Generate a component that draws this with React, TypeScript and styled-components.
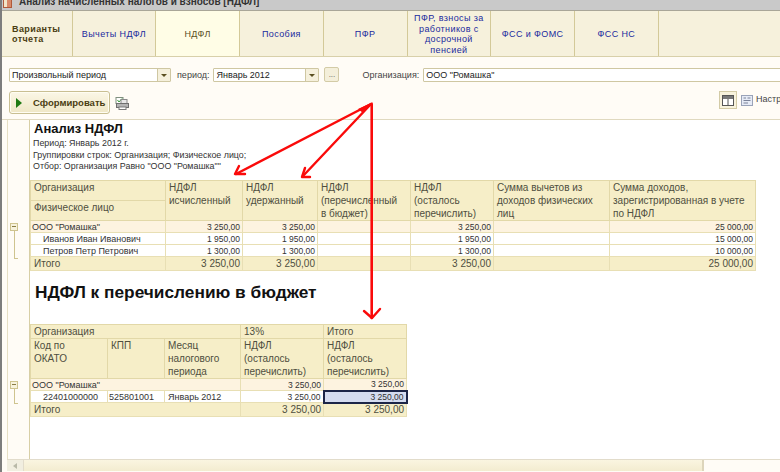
import React from 'react'
import styled, { createGlobalStyle } from 'styled-components'

const GlobalStyle = createGlobalStyle`
  html, body {
    margin: 0;
    padding: 0;
    width: 780px;
    height: 472px;
    overflow: hidden;
    background: #fffcf6;
    font-family: "Liberation Sans", Arial, sans-serif;
    color: #222;
  }
`

const Window = styled.div`
  position: relative;
  width: 780px;
  height: 472px;
  box-sizing: border-box;
  border-left: 2px solid #7d7d7d;
  display: flex;
  flex-direction: column;
  overflow: hidden;
`

const TitleBar = styled.div`
  height: 11px;
  flex: none;
  display: flex;
  gap: 7px;
  padding-left: 1px;
  background: #c9c9c9;
  border-bottom: 1px solid #a9a698;
  box-sizing: border-box;
  overflow: hidden;
`

const TitleIcon = styled.div`
  width: 9px;
  height: 8px;
  background: linear-gradient(90deg, #f3e6c8 50%, #d98a6a 50%);
  border: 1px solid #b05a3a;
  box-sizing: border-box;
  border-top: none;
`

const TitleText = styled.div`
  font-size: 10px;
  font-weight: 700;
  line-height: 4px;
  color: #333;
  white-space: nowrap;
`

const Tabs = styled.div`
  height: 46px;
  flex: none;
  display: flex;
  background: #f6f1dc;
  border-bottom: 1px solid #d8d0aa;
  box-sizing: border-box;
`

const Tab = styled.div<{ $active?: boolean; $first?: boolean }>`
  width: ${p => (p.$first ? 70.5 : 83.75)}px;
  box-sizing: border-box;
  flex: none;
  display: flex;
  align-items: center;
  justify-content: ${p => (p.$first ? 'flex-start' : 'center')};
  text-align: ${p => (p.$first ? 'left' : 'center')};
  padding: 1px 0 0 ${p => (p.$first ? 10 : 0)}px;
  font-size: 9px;
  line-height: 10.5px;
  letter-spacing: 0.4px;
  font-weight: ${p => (p.$first ? 700 : 400)};
  color: ${p => (p.$first ? '#4a3d12' : p.$active ? '#5a5024' : '#1a2a9e')};
  background: ${p => (p.$active ? '#fffde6' : 'transparent')};
  border-right: 1px solid #d3c998;
`

const FilterRow = styled.div`
  flex: none;
  height: 31px;
  display: flex;
  align-items: flex-start;
  padding: 11px 0 0 7px;
  box-sizing: border-box;
`

const Select = styled.div<{ $width: number }>`
  width: ${p => p.$width}px;
  flex: none;
  height: 14px;
  box-sizing: border-box;
  display: flex;
  align-items: center;
  background: #fff;
  border: 1px solid #cfc7a2;
  border-radius: 1px;
  font-size: 9px;
  padding-left: 2px;
  color: #222;
`

const SelectValue = styled.span`
  flex: 1;
  white-space: nowrap;
`

const SelectArrow = styled.span`
  width: 12px;
  height: 12px;
  flex: none;
  display: flex;
  align-items: center;
  justify-content: center;
  background: #f5f0dc;
  border-left: 1px solid #cfc7a2;
  &::after {
    content: '';
    border-left: 3px solid transparent;
    border-right: 3px solid transparent;
    border-top: 3px solid #5a4f20;
  }
`

const FieldLabel = styled.span<{ $left: number; $right: number }>`
  flex: none;
  font-size: 9px;
  line-height: 14px;
  margin: 0 ${p => p.$right}px 0 ${p => p.$left}px;
  color: #444;
  white-space: nowrap;
`

const DotsButton = styled.div`
  width: 15px;
  height: 15px;
  margin: -1px 0 0 5px;
  flex: none;
  box-sizing: border-box;
  background: #f4efda;
  border: 1px solid #d3cba6;
  border-radius: 2px;
  font-size: 8px;
  line-height: 14px;
  text-align: center;
  color: #555;
`

const ActionRow = styled.div`
  flex: none;
  height: 32px;
  display: flex;
  align-items: flex-start;
  padding: 3px 0 0 7px;
  box-sizing: border-box;
  border-bottom: 1px solid #e0d9bf;
`

const RunButton = styled.div`
  width: 101px;
  height: 23px;
  flex: none;
  box-sizing: border-box;
  display: flex;
  align-items: center;
  gap: 11px;
  padding-left: 6px;
  background: linear-gradient(#fbf7e6, #efe7c6);
  border: 1px solid #c9bf92;
  border-radius: 3px;
  box-shadow: inset 0 0 0 1px #fffdf2;
  font-size: 9.5px;
  font-weight: 700;
  color: #4a3d12;
  white-space: nowrap;
`

const PrintIcon = styled.svg`
  flex: none;
  margin: 6px 0 0 5px;
`

const Spacer = styled.div`
  flex: 1;
`

const ToggleButton = styled.div`
  width: 18px;
  height: 18px;
  flex: none;
  box-sizing: border-box;
  display: flex;
  align-items: center;
  justify-content: center;
  background: #f7f2dc;
  border: 1px solid #d3cba6;
`

const SettingsIcon = styled.svg`
  flex: none;
  margin: 4px 0 0 4px;
`

const SettingsLabel = styled.span`
  flex: none;
  width: 24px;
  margin: 3px 0 0 3px;
  overflow: hidden;
  font-size: 9px;
  line-height: 11px;
  color: #444;
  white-space: nowrap;
`

const Workspace = styled.div`
  flex: 1;
  min-height: 0;
  display: flex;
  padding-left: 5px;
`

const Gutter = styled.div`
  position: relative;
  width: 23px;
  flex: none;
  height: 340px;
  border-left: 1px solid #e6dfc4;
  border-right: 1px solid #d8cfa6;
  box-sizing: border-box;
`

const Collapse = styled.div<{ $top: number; $height: number }>`
  position: absolute;
  left: 2px;
  top: ${p => p.$top}px;
  width: 8px;
  height: 8px;
  box-sizing: border-box;
  background: #f7f2dc;
  border: 1px solid #cfc48f;
  &::before {
    content: '';
    position: absolute;
    left: 1px;
    right: 1px;
    top: 2px;
    height: 1px;
    background: #8a7d45;
  }
  &::after {
    content: '';
    position: absolute;
    left: 3px;
    top: 7px;
    width: 3px;
    height: ${p => p.$height}px;
    border-left: 1px solid #cfc48f;
    border-bottom: 1px solid #cfc48f;
  }
`

const Report = styled.div`
  flex: 1;
  min-width: 0;
  height: 340px;
  background: #fff;
  overflow: hidden;
`

const ReportTitle = styled.div`
  font-size: 13px;
  font-weight: 700;
  line-height: 15px;
  margin: 1px 0 0 4px;
  color: #111;
`

const ReportMeta = styled.div`
  font-size: 8.9px;
  line-height: 11.5px;
  margin-left: 3px;
  color: #333;
  white-space: nowrap;
`

const MetaBlock = styled.div`
  margin: 2px 0 6px;
  height: 36px;
`

const Heading = styled.div`
  font-size: 17.3px;
  font-weight: 700;
  line-height: 20px;
  margin: 11px 0 22px 5px;
  color: #111;
  white-space: nowrap;
`

const Table = styled.table<{ $width: number }>`
  width: ${p => p.$width}px;
  border-collapse: collapse;
  table-layout: fixed;
`

const HeadCell = styled.td<{ $height?: number }>`
  height: ${p => (p.$height ? `${p.$height}px` : 'auto')};
  padding: 0 2px 0 3px;
  vertical-align: top;
  background: #f6eec8;
  border: 1px solid #e2d8a8;
  box-sizing: border-box;
  font-size: 10px;
  line-height: 13px;
  color: #4f4f40;
`

const DataCell = styled.td<{
  $kind: 'group' | 'row' | 'total'
  $right?: boolean
  $indent?: number
  $selected?: boolean
  $name?: boolean
}>`
  padding: 0 2px 0 ${p => p.$indent ?? 1}px;
  box-sizing: border-box;
  white-space: nowrap;
  overflow: hidden;
  text-align: ${p => (p.$right ? 'right' : 'left')};
  height: ${p => (p.$kind === 'total' ? 14 : 12)}px;
  line-height: 10px;
  background: ${p => (p.$selected ? '#d5dcef' : p.$kind === 'group' ? '#fdf3e0' : p.$kind === 'total' ? '#f6eec8' : '#fff')};
  border: ${p => (p.$selected ? '2px solid #1c2547' : '1px solid #e8dfb4')};
  font-size: ${p => (p.$kind === 'total' ? '10px' : p.$name ? '9px' : '8.5px')};
  color: ${p => (p.$kind === 'total' ? '#4f4f40' : '#333')};
`

const Scrollbar = styled.div`
  position: absolute;
  left: 5px;
  right: 0;
  bottom: 1px;
  height: 12px;
  display: flex;
  background: #fffcf6;
  border-top: 1px solid #e2dccb;
  box-sizing: border-box;
`

const ScrollArrow = styled.div`
  width: 16px;
  flex: none;
  display: flex;
  align-items: center;
  justify-content: center;
  background: #f1eee0;
  border-right: 1px solid #e2dccb;
  &::after {
    content: '';
    border-top: 3px solid transparent;
    border-bottom: 3px solid transparent;
    border-right: 4px solid #b9b9a8;
  }
`

const ScrollThumb = styled.div`
  width: 678px;
  flex: none;
  background: linear-gradient(#faf5e0, #f3ecd0);
  border-right: 2px solid #ddd5bb;
`

const Arrows = styled.svg`
  position: absolute;
  left: -2px;
  top: 0;
  pointer-events: none;
`

const tabs = ['Вычеты НДФЛ', 'НДФЛ', 'Пособия', 'ПФР', 'ПФР, взносы за работников с досрочной пенсией', 'ФСС и ФОМС', 'ФСС НС']

const firstColumns = [135, 77, 75, 93, 83, 116, 146]
const secondColumns = [77, 57, 76, 83, 83]

const people = [
  { name: 'Иванов Иван Иванович', tax: '1 950,00', income: '15 000,00' },
  { name: 'Петров Петр Петрович', tax: '1 300,00', income: '10 000,00' },
]

const Columns = ({ widths }: { widths: number[] }) => (
  <colgroup>
    {widths.map((w, i) => (
      <col key={i} width={w} />
    ))}
  </colgroup>
)

const App = () => {
  return (
    <Window>
      <GlobalStyle />
      <TitleBar>
        <TitleIcon />
        <TitleText>Анализ начисленных налогов и взносов [НДФЛ]</TitleText>
      </TitleBar>

      <Tabs>
        <Tab $first>Варианты<br />отчета</Tab>
        {tabs.map(t => (
          <Tab key={t} $active={t === 'НДФЛ'}>{t}</Tab>
        ))}
      </Tabs>

      <FilterRow>
        <Select $width={162}>
          <SelectValue>Произвольный период</SelectValue>
          <SelectArrow />
        </Select>
        <FieldLabel $left={6} $right={4}>период:</FieldLabel>
        <Select $width={106}>
          <SelectValue>Январь 2012</SelectValue>
          <SelectArrow />
        </Select>
        <DotsButton>...</DotsButton>
        <FieldLabel $left={23} $right={4}>Организация:</FieldLabel>
        <Select $width={360}>
          <SelectValue>ООО "Ромашка"</SelectValue>
        </Select>
      </FilterRow>

      <ActionRow>
        <RunButton>
          <svg width="6" height="10" viewBox="0 0 6 10">
            <path d="M0 0 L6 5 L0 10 Z" fill="#1f7a12" />
          </svg>
          Сформировать
        </RunButton>
        <PrintIcon width="14" height="13" viewBox="0 0 14 13">
          <rect x="1" y="0.5" width="7" height="6" fill="#fff" stroke="#7f8f7f" />
          <path d="M2.5 3 L4 5 L7 1.5" fill="none" stroke="#3a9a3a" />
          <rect x="6" y="2.5" width="6" height="4" fill="#e8e8e8" stroke="#8a8a8a" />
          <rect x="1.5" y="6.5" width="12" height="4" fill="#b5b5b5" stroke="#6f6f6f" />
          <rect x="4" y="10" width="7" height="2.5" fill="#fff" stroke="#7a7a7a" />
        </PrintIcon>
        <Spacer />
        <ToggleButton>
          <svg width="12" height="11" viewBox="0 0 12 11">
            <rect x="0.5" y="0.5" width="11" height="10" fill="#fff" stroke="#555" />
            <rect x="1" y="1" width="10" height="3" fill="#777" />
            <path d="M6 4 V10" stroke="#555" />
          </svg>
        </ToggleButton>
        <SettingsIcon width="12" height="11" viewBox="0 0 12 11">
          <rect x="0.5" y="0.5" width="11" height="10" fill="#e6ebf6" stroke="#9aa3b8" />
          <path d="M2.5 3 H5 M6.5 3 H9.5 M2.5 5.5 H9.5 M2.5 8 H7" stroke="#7a8298" />
        </SettingsIcon>
        <SettingsLabel>Настройка</SettingsLabel>
      </ActionRow>

      <Workspace>
        <Gutter>
          <Collapse $top={103} $height={27} />
          <Collapse $top={261} $height={14} />
        </Gutter>
        <Report>
          <ReportTitle>Анализ НДФЛ</ReportTitle>
          <MetaBlock>
            <ReportMeta>Период: Январь 2012 г.</ReportMeta>
            <ReportMeta>Группировки строк: Организация; Физическое лицо;</ReportMeta>
            <ReportMeta>Отбор: Организация Равно "ООО "Ромашка""</ReportMeta>
          </MetaBlock>

          <Table $width={725}>
            <Columns widths={firstColumns} />
            <tbody>
              <tr>
                <HeadCell $height={20}>Организация</HeadCell>
                <HeadCell rowSpan={2}>НДФЛ<br />исчисленный</HeadCell>
                <HeadCell rowSpan={2}>НДФЛ<br />удержанный</HeadCell>
                <HeadCell rowSpan={2}>НДФЛ<br />(перечисленный<br />в бюджет)</HeadCell>
                <HeadCell rowSpan={2}>НДФЛ<br />(осталось<br />перечислить)</HeadCell>
                <HeadCell rowSpan={2}>Сумма вычетов из<br />доходов физических<br />лиц</HeadCell>
                <HeadCell rowSpan={2}>Сумма доходов,<br />зарегистрированная в учете<br />по НДФЛ</HeadCell>
              </tr>
              <tr>
                <HeadCell $height={20}>Физическое лицо</HeadCell>
              </tr>
              <tr>
                <DataCell $kind="group" $name>ООО "Ромашка"</DataCell>
                <DataCell $kind="group" $right>3 250,00</DataCell>
                <DataCell $kind="group" $right>3 250,00</DataCell>
                <DataCell $kind="group" />
                <DataCell $kind="group" $right>3 250,00</DataCell>
                <DataCell $kind="group" />
                <DataCell $kind="group" $right>25 000,00</DataCell>
              </tr>
              {people.map(p => (
                <tr key={p.name}>
                  <DataCell $kind="row" $indent={12} $name>{p.name}</DataCell>
                  <DataCell $kind="row" $right>{p.tax}</DataCell>
                  <DataCell $kind="row" $right>{p.tax}</DataCell>
                  <DataCell $kind="row" />
                  <DataCell $kind="row" $right>{p.tax}</DataCell>
                  <DataCell $kind="row" />
                  <DataCell $kind="row" $right>{p.income}</DataCell>
                </tr>
              ))}
              <tr>
                <DataCell $kind="total" $indent={3}>Итого</DataCell>
                <DataCell $kind="total" $right>3 250,00</DataCell>
                <DataCell $kind="total" $right>3 250,00</DataCell>
                <DataCell $kind="total" />
                <DataCell $kind="total" $right>3 250,00</DataCell>
                <DataCell $kind="total" />
                <DataCell $kind="total" $right>25 000,00</DataCell>
              </tr>
            </tbody>
          </Table>

          <Heading>НДФЛ к перечислению в бюджет</Heading>

          <Table $width={376}>
            <Columns widths={secondColumns} />
            <tbody>
              <tr>
                <HeadCell colSpan={3}>Организация</HeadCell>
                <HeadCell>13%</HeadCell>
                <HeadCell>Итого</HeadCell>
              </tr>
              <tr>
                <HeadCell>Код по<br />ОКАТО</HeadCell>
                <HeadCell>КПП</HeadCell>
                <HeadCell>Месяц<br />налогового<br />периода</HeadCell>
                <HeadCell>НДФЛ<br />(осталось<br />перечислить)</HeadCell>
                <HeadCell>НДФЛ<br />(осталось<br />перечислить)</HeadCell>
              </tr>
              <tr>
                <DataCell $kind="group" colSpan={3} $name>ООО "Ромашка"</DataCell>
                <DataCell $kind="group" $right>3 250,00</DataCell>
                <DataCell $kind="group" $right>3 250,00</DataCell>
              </tr>
              <tr>
                <DataCell $kind="row" $indent={12} $name>22401000000</DataCell>
                <DataCell $kind="row" $name>525801001</DataCell>
                <DataCell $kind="row" $indent={3} $name>Январь 2012</DataCell>
                <DataCell $kind="row" $right>3 250,00</DataCell>
                <DataCell $kind="row" $right $selected>3 250,00</DataCell>
              </tr>
              <tr>
                <DataCell $kind="total" $indent={3} colSpan={3}>Итого</DataCell>
                <DataCell $kind="total" $right>3 250,00</DataCell>
                <DataCell $kind="total" $right>3 250,00</DataCell>
              </tr>
            </tbody>
          </Table>
        </Report>
      </Workspace>

      <Scrollbar>
        <ScrollArrow />
        <ScrollThumb />
      </Scrollbar>

      <Arrows width="780" height="472" viewBox="0 0 780 472">
        <g fill="none" stroke="#fa0a0a" strokeWidth="2.4" strokeLinecap="round" strokeLinejoin="round">
          <path d="M371 104 L236 174" />
          <path d="M371 104 L303 176" />
          <path d="M371.7 104 V318" strokeWidth="2.6" />
          <path d="M364 311 L372 318 L380 309" />
          <path d="M239 166 L235 174 L245 174" />
          <path d="M305 168 L302 177 L310 177" />
        </g>
        <path d="M373 102 L358 109 L363 113 Z" fill="#fa0a0a" />
      </Arrows>
    </Window>
  )
}

export default App
